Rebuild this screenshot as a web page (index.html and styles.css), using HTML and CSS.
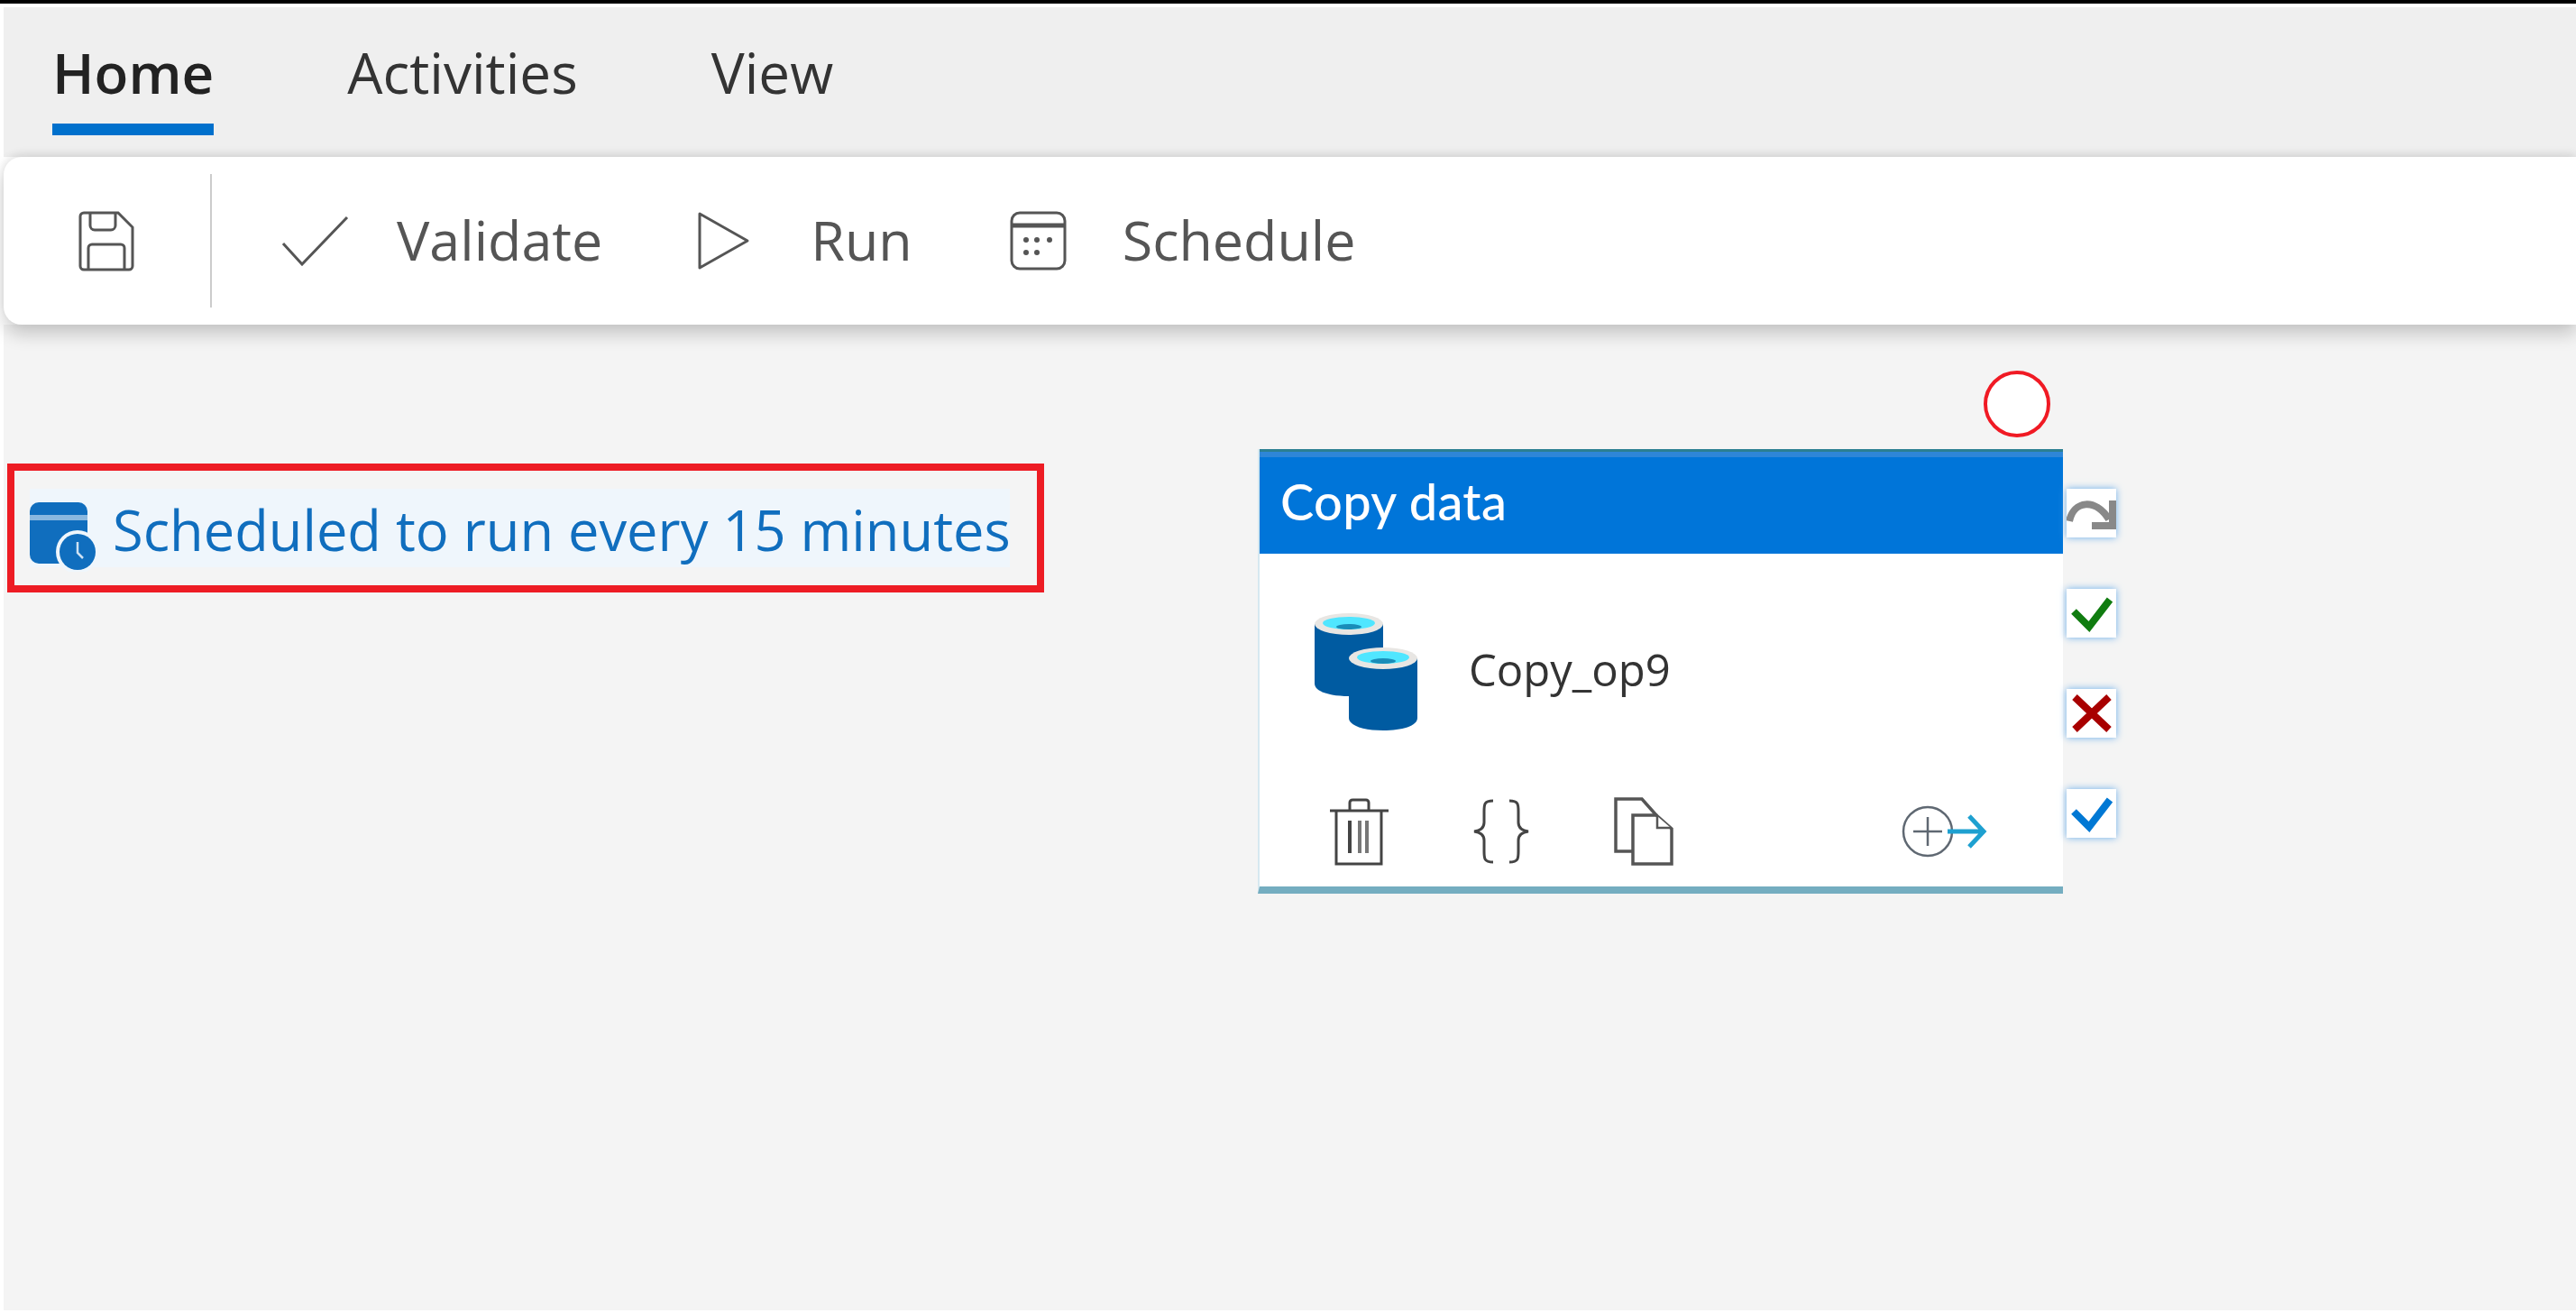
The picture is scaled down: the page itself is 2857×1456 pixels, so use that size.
FILE: index.html
```html
<!DOCTYPE html>
<html lang="en">
<head>
    <meta charset="UTF-8">
    <title>Pipeline</title>
    <link rel="stylesheet" href="styles.css">
</head>
<body>
    <div class="frame">
        <nav class="tabs">
            <a class="tab active">Home</a>
            <a class="tab">Activities</a>
            <a class="tab">View</a>
        </nav>
        <div class="toolbar">
            <svg class="save-icon" width="62" height="67" viewBox="0 0 62 67" fill="none" stroke="#555" stroke-width="3">
                <path d="M6 2H44L60 18V61a4 4 0 0 1-4 4H6a4 4 0 0 1-4-4V6a4 4 0 0 1 4-4z"/>
                <path d="M13 2V16a5 5 0 0 0 5 5H36a5 5 0 0 0 5-5V2"/>
                <path d="M11 65V41a4 4 0 0 1 4-4H47a4 4 0 0 1 4 4V65"/>
            </svg>
            <div class="divider"></div>
            <button class="tool tool-validate">
                <svg width="75" height="56" viewBox="0 0 75 56" fill="none" stroke="#555" stroke-width="3"><path d="M2 31L23 54L73 2"/></svg>
                <span>Validate</span>
            </button>
            <button class="tool tool-run">
                <svg width="59" height="66" viewBox="0 0 59 66" fill="none" stroke="#555" stroke-width="3" stroke-linejoin="round"><path d="M3 3L56 33L3 63z"/></svg>
                <span>Run</span>
            </button>
            <button class="tool tool-schedule">
                <svg width="63" height="66" viewBox="0 0 63 66" fill="none" stroke="#555" stroke-width="3">
                    <rect x="2" y="2" width="59" height="62" rx="9"/>
                    <path d="M2 16H61" stroke-width="5"/>
                    <g fill="#555" stroke="none">
                        <circle cx="18" cy="32" r="3"/><circle cx="30" cy="32" r="3"/><circle cx="44" cy="32" r="3"/>
                        <circle cx="18" cy="46" r="3"/><circle cx="30" cy="46" r="3"/>
                    </g>
                </svg>
                <span>Schedule</span>
            </button>
        </div>
        <main class="canvas">
            <div class="callout">
                <div class="status">
                    <svg class="status-icon" width="74" height="77" viewBox="0 0 74 77">
                        <path d="M0 10a10 10 0 0 1 10-10H54a10 10 0 0 1 10 10V58a10 10 0 0 1-10 10H10a10 10 0 0 1-10-10z" fill="#106ebe"/>
                        <rect x="0" y="14" width="64" height="6" fill="#8ab8e0"/>
                        <circle cx="53" cy="55" r="24" fill="#eff6fc"/>
                        <circle cx="53" cy="55" r="20" fill="#106ebe"/>
                        <path d="M53 44V56L59 62" fill="none" stroke="#cfe2f3" stroke-width="2.5"/>
                    </svg>
                    <span class="status-text">Scheduled to run every 15 minutes</span>
                </div>
            </div>

            <div class="marker"></div>

            <div class="node">
                <div class="node-card">
                    <div class="node-title">Copy data</div>
                    <div class="node-body">
                        <svg width="116" height="131" viewBox="0 0 116 131">
                            <g>
                                <path d="M1 12V78C1 87 18 92 39 92C60 92 77 87 77 78V12z" fill="#005ba1"/>
                                <ellipse cx="39" cy="12" rx="38" ry="12" fill="#e8e6e3"/>
                                <ellipse cx="39" cy="11" rx="29" ry="7" fill="#50e6ff"/>
                                <ellipse cx="39" cy="15" rx="14" ry="3" fill="#1a8cb8"/>
                            </g>
                            <g>
                                <path d="M39 50V116C39 125 56 130 77 130C98 130 115 125 115 116V50z" fill="#005ba1"/>
                                <ellipse cx="77" cy="50" rx="38" ry="12" fill="#e8e6e3"/>
                                <ellipse cx="77" cy="49" rx="29" ry="7" fill="#50e6ff"/>
                                <ellipse cx="77" cy="53" rx="14" ry="3" fill="#1a8cb8"/>
                            </g>
                        </svg>
                        <span class="node-name">Copy_op9</span>
                    </div>
                    <div class="node-actions">
                        <svg class="act-trash" width="65" height="76" viewBox="0 0 65 76" fill="none" stroke="#444" stroke-width="3">
                            <path d="M0 15H65"/>
                            <path d="M22 15V6a3 3 0 0 1 3-3H40a3 3 0 0 1 3 3V15"/>
                            <path d="M7 15V74H57V15"/>
                            <path d="M22 26V62" stroke-width="4"/>
                            <path d="M33 26V62M41 26V62" stroke="#777" stroke-width="4"/>
                        </svg>
                        <svg class="act-braces" width="66" height="72" viewBox="0 0 66 72" fill="none" stroke="#444" stroke-width="3">
                            <path d="M24 2C14 2 14 6 14 14V26C14 32 10 35 3 36C10 37 14 40 14 46V58C14 66 14 70 24 70"/>
                            <path d="M42 2C52 2 52 6 52 14V26C52 32 56 35 63 36C56 37 52 40 52 46V58C52 66 52 70 42 70"/>
                        </svg>
                        <svg class="act-copy" width="67" height="77" viewBox="0 0 67 77" fill="#fff" stroke="#555" stroke-width="3.5">
                            <path d="M3 2H32L48 20V60H3z"/>
                            <path d="M22 20H48L65 35V74H22z"/>
                            <path d="M49 21V34H64" stroke-width="2.5"/>
                        </svg>
                        <svg class="act-add" width="97" height="60" viewBox="0 0 97 60" fill="none">
                            <circle cx="30" cy="30" r="27" stroke="#5f6872" stroke-width="2.5"/>
                            <path d="M14 30H46M30 14V46" stroke="#5f6872" stroke-width="2.5"/>
                            <path d="M52 30H92M76 13L92 30L76 47" stroke="#1ea0d0" stroke-width="5"/>
                        </svg>
                    </div>
                </div>
                <div class="node-badges">
                    <div class="badge">
                        <svg width="55" height="54" viewBox="0 0 55 54" fill="none" stroke="#888" stroke-width="8"><path d="M3 36C8 13 32 10 47 34"/><path d="M51 13V41H28"/></svg>
                    </div>
                    <div class="badge">
                        <svg width="55" height="54" viewBox="0 0 55 54" fill="none" stroke="#107c10" stroke-width="8"><path d="M8 25L25 42L48 12"/></svg>
                    </div>
                    <div class="badge">
                        <svg width="55" height="54" viewBox="0 0 55 54" fill="none" stroke="#a80000" stroke-width="8"><path d="M9 9L47 45M47 9L9 45"/></svg>
                    </div>
                    <div class="badge">
                        <svg width="55" height="54" viewBox="0 0 55 54" fill="none" stroke="#0078d4" stroke-width="8"><path d="M8 25L25 42L48 12"/></svg>
                    </div>
                </div>
            </div>
        </main>
    </div>
</body>
</html>
```
FILE: styles.css
```css
*{
    box-sizing: border-box;
}
html,body{
    height: 100%;
    margin: 0px;
}
body{
    background-color: white;
    border-top: 4px solid black;
    font-family: "Open Sans", "Noto Sans", sans-serif;
    overflow: hidden;
}
.frame{
    display: flex;
    flex-direction: column;
    height: 100%;
    padding: 4px 0px 3px 4px;
    filter: blur(0.7px);
}
.tabs{
    display: flex;
    gap: 148px;
    height: 166px;
    padding: 30px 0px 0px 54px;
    background-color: #efefef;
    flex: none;
}
.tab{
    height: 112px;
    font-size: 62px;
    line-height: 84px;
    color: #333;
}
.tab.active{
    font-weight: 600;
    color: #222;
    border-bottom: 13px solid #0070cc;
}
.toolbar{
    position: relative;
    z-index: 2;
    display: flex;
    align-items: center;
    flex: none;
    height: 186px;
    padding-left: 83px;
    background-color: white;
    border-radius: 20px 0px 0px 20px;
    box-shadow: 0px 10px 20px rgba(0,0,0,0.2), 0px -4px 10px rgba(0,0,0,0.08);
}
.divider{
    width: 2px;
    height: 148px;
    margin: 0px 77px 0px 84px;
    background-color: #ccc;
}
.tool{
    display: flex;
    align-items: center;
    padding: 0px;
    border: none;
    background: none;
    font-family: inherit;
    font-size: 61px;
    line-height: 80px;
    color: #555;
}
.tool span{
    margin-bottom: 3px;
}
.tool-validate{
    gap: 53px;
    margin-right: 105px;
}
.tool-run{
    gap: 67px;
    margin-right: 108px;
}
.tool-schedule{
    gap: 62px;
}
.canvas{
    position: relative;
    flex: 1;
    background-color: #f4f4f4;
}
.callout{
    position: absolute;
    left: 4px;
    top: 154px;
    width: 1150px;
    height: 143px;
    padding: 20px 0px 0px 17px;
    border: 8px solid #ed1c24;
}
.status{
    display: flex;
    align-items: center;
    gap: 18px;
    width: 1087px;
    height: 87px;
    padding-top: 3px;
    background-color: #eff6fc;
    color: #106ebe;
    font-size: 61.4px;
}
.status-text{
    white-space: nowrap;
}
.status-icon{
    flex: none;
    margin-top: 17px;
}
.marker{
    position: absolute;
    left: 2196px;
    top: 51px;
    width: 74px;
    height: 74px;
    border: 4px solid #f01a24;
    border-radius: 50%;
    background-color: white;
}
.node{
    position: absolute;
    left: 1391px;
    top: 138px;
    display: flex;
}
.node-card{
    display: flex;
    flex-direction: column;
    width: 893px;
    height: 493px;
    background-color: white;
    border-left: 2px solid #d6e8f0;
    border-bottom: 8px solid #74adc0;
}
.node-title{
    height: 116px;
    padding-left: 23px;
    background-color: #0075d9;
    border-top: 3px solid #2b7f92;
    box-shadow: inset 0px 6px 0px #2e86d8;
    color: white;
    font-family: Lato, sans-serif;
    font-size: 56px;
    font-weight: 500;
    line-height: 110px;
    letter-spacing: 0.3px;
}
.node-body{
    display: flex;
    align-items: center;
    gap: 56px;
    height: 262px;
    padding-left: 60px;
    flex: none;
}
.node-name{
    font-size: 49px;
    color: #333;
    margin-bottom: 6px;
}
.node-actions{
    display: flex;
    align-items: center;
    padding: 0px 0px 0px 78px;
    height: 78px;
    margin-top: 7px;
}
.act-trash{
    margin-right: 92px;
}
.act-braces{
    margin-right: 91px;
}
.act-copy{
    margin-right: 252px;
}
.node-badges{
    display: flex;
    flex-direction: column;
    gap: 57px;
    margin: 44px 0px 0px 4px;
}
.badge{
    width: 55px;
    height: 54px;
    background-color: white;
    box-shadow: 0px 0px 8px #6aaeea;
}
```
